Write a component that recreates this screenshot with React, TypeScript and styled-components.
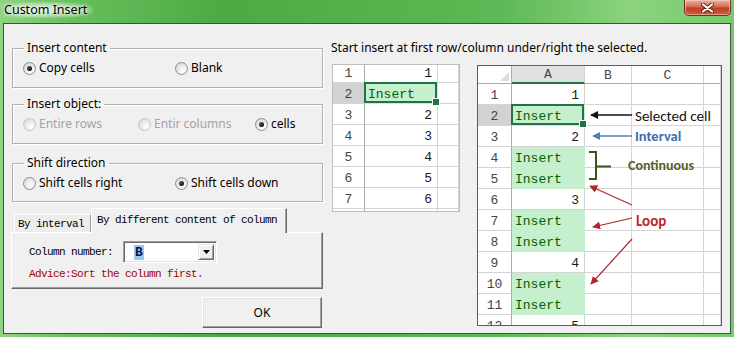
import { Fragment } from "react";
import styled, { createGlobalStyle, css } from "styled-components";

const UI = `"Segoe UI", "Noto Sans", "Liberation Sans", sans-serif`;
const SONG = `SimSun, "Liberation Mono", monospace`;
const CALIBRI = `Calibri, "Liberation Sans", Arial, sans-serif`;

type CellData = { num?: string; insert?: boolean; selected?: boolean; blank?: boolean };

const smallSheet: CellData[] = [
    { num: "1" },
    { insert: true, selected: true },
    { num: "2" },
    { num: "3" },
    { num: "4" },
    { num: "5" },
    { num: "6" },
    { blank: true },
];

const bigSheet: CellData[] = [
    { num: "1" },
    { insert: true, selected: true },
    { num: "2" },
    { insert: true },
    { insert: true },
    { num: "3" },
    { insert: true },
    { insert: true },
    { num: "4" },
    { insert: true },
    { insert: true },
    { num: "5" },
];

function Radio({ label, checked, disabled }: { label: string; checked?: boolean; disabled?: boolean }) {
    return (
        <RadioLabel $disabled={disabled}>
            <RadioDot $checked={checked} $disabled={disabled} />
            {label}
        </RadioLabel>
    );
}

function SheetRows({ rows, extraCols }: { rows: CellData[]; extraCols: number }) {
    return (
        <>
            {rows.map((r, i) => (
                <Fragment key={i}>
                    <RowHead $active={!!r.selected}>{r.blank ? "" : i + 1}</RowHead>
                    <Cell $fill={!!r.insert} $right={!!r.num} $selected={!!r.selected}>
                        {r.blank ? "" : r.num ?? "Insert"}
                    </Cell>
                    {Array.from({ length: extraCols }).map((_, j) => (
                        <Cell key={j} />
                    ))}
                </Fragment>
            ))}
        </>
    );
}

function App() {
    return (
        <>
            <GlobalStyle />
            <Window>
                <TitleBar>
                    <TitleText>Custom Insert</TitleText>
                    <CloseButton>
                        <svg width="13" height="10" viewBox="0 0 13 10">
                            <path d="M2 1.5L11 8.5M11 1.5L2 8.5" stroke="#5a2418" strokeWidth="4" strokeLinecap="round" />
                            <path d="M2 1.5L11 8.5M11 1.5L2 8.5" stroke="#fff" strokeWidth="2.2" strokeLinecap="round" />
                        </svg>
                    </CloseButton>
                </TitleBar>

                <Client>
                    <LeftColumn>
                        <Group $mt={0} $pb={11}>
                            <Legend>Insert content</Legend>
                            <RadioRow $cols="152px 1fr">
                                <Radio label="Copy cells" checked />
                                <Radio label="Blank" />
                            </RadioRow>
                        </Group>
                        <Group $mt={9} $pb={11}>
                            <Legend>Insert object:</Legend>
                            <RadioRow $cols="115px 117px 1fr">
                                <Radio label="Entire rows" disabled />
                                <Radio label="Entir columns" disabled />
                                <Radio label="cells" checked />
                            </RadioRow>
                        </Group>
                        <Group $mt={12} $pb={10}>
                            <Legend>Shift direction</Legend>
                            <RadioRow $cols="152px 1fr">
                                <Radio label="Shift cells right" />
                                <Radio label="Shift cells down" checked />
                            </RadioRow>
                        </Group>

                        <TabStrip>
                            <Tab $w={77}>By interval</Tab>
                            <Tab $w={196} $active>By different content of column</Tab>
                        </TabStrip>
                        <TabPanel>
                            <FieldRow>
                                <MonoText>Column number:</MonoText>
                                <Combo>
                                    <ComboValue>
                                        <Selected>B</Selected>
                                    </ComboValue>
                                    <ComboButton>
                                        <svg width="7" height="4" viewBox="0 0 7 4">
                                            <path d="M0 0H7L3.5 4z" fill="#000" />
                                        </svg>
                                    </ComboButton>
                                </Combo>
                            </FieldRow>
                            <Advice>Advice:Sort the column first.</Advice>
                        </TabPanel>

                        <OkButton>OK</OkButton>
                    </LeftColumn>

                    <RightColumn>
                        <Heading>Start insert at first row/column under/right the selected.</Heading>
                        <Sheets>
                            <Sheet $cols="32px 73px 21px" $rows="18px repeat(7, 21px)" $w={128} $h={148} $frame="#bdbdbd">
                                <SheetRows rows={smallSheet} extraCols={1} />
                            </Sheet>

                            <SheetFrame>
                                <Sheet
                                    $cols="34px 73px 47px 72px 17px"
                                    $rows="18px repeat(12, 21px)"
                                    $w={245}
                                    $h={261}
                                    $frame="#5c5c5c"
                                >
                                    <Corner>
                                        <svg width="9" height="9" viewBox="0 0 9 9">
                                            <path d="M9 0V9H0z" fill="#dcdcdc" />
                                        </svg>
                                    </Corner>
                                    <ColHead $active>A</ColHead>
                                    <ColHead>B</ColHead>
                                    <ColHead>C</ColHead>
                                    <ColHead />
                                    <SheetRows rows={bigSheet} extraCols={3} />
                                </Sheet>

                                <Overlay width="245" height="261" viewBox="0 0 245 261">
                                    <defs>
                                        <marker id="hk" viewBox="0 0 10 10" refX="9" refY="5" markerUnits="userSpaceOnUse" markerWidth="8" markerHeight="8" orient="auto">
                                            <path d="M0 0L10 5L0 10z" fill="#111" />
                                        </marker>
                                        <marker id="hb" viewBox="0 0 10 10" refX="9" refY="5" markerUnits="userSpaceOnUse" markerWidth="8" markerHeight="8" orient="auto">
                                            <path d="M0 0L10 5L0 10z" fill="#4f7fbd" />
                                        </marker>
                                        <marker id="hr" viewBox="0 0 10 10" refX="9" refY="5" markerUnits="userSpaceOnUse" markerWidth="8" markerHeight="8" orient="auto">
                                            <path d="M0 0L10 5L0 10z" fill="#b3262c" />
                                        </marker>
                                    </defs>
                                    <line x1="155" y1="50" x2="114" y2="50" stroke="#111" strokeWidth="1.3" markerEnd="url(#hk)" />
                                    <line x1="155" y1="71" x2="116" y2="71" stroke="#4f7fbd" strokeWidth="1.3" markerEnd="url(#hb)" />
                                    <path d="M112 87H119V114H112M119 101.5H134" fill="none" stroke="#3d5222" strokeWidth="2" />
                                    <line x1="155" y1="140" x2="113" y2="121" stroke="#b3262c" strokeWidth="1.2" markerEnd="url(#hr)" />
                                    <line x1="155" y1="153" x2="116" y2="162" stroke="#b3262c" strokeWidth="1.2" markerEnd="url(#hr)" />
                                    <line x1="155" y1="174" x2="114" y2="219" stroke="#b3262c" strokeWidth="1.2" markerEnd="url(#hr)" />
                                </Overlay>

                                <Note $x={158} $y={43} $size={15} $color="#111">Selected cell</Note>
                                <Note $x={158} $y={63} $size={14.5} $color="#3f6fab" $bold>Interval</Note>
                                <Note $x={151} $y={93} $size={14} $color="#4f6228" $bold>Continuous</Note>
                                <Note $x={159} $y={148} $size={15} $color="#c0272d" $bold>Loop</Note>
                            </SheetFrame>
                        </Sheets>
                    </RightColumn>
                </Client>
            </Window>
        </>
    );
}

const GlobalStyle = createGlobalStyle`
    * { box-sizing: border-box; }
    html, body { margin: 0; padding: 0; }
    body {
        width: 734px;
        height: 337px;
        overflow: hidden;
        font-family: ${UI};
    }
`;

const Window = styled.div`
    width: 734px;
    height: 337px;
    display: flex;
    flex-direction: column;
    padding: 0 3px 3px 3px;
    background: linear-gradient(
        90deg,
        #8fd383 0%,
        #67bf5c 10%,
        #4ea945 30%,
        #55b14b 50%,
        #5db855 68%,
        #8bd37f 86%,
        #78c96d 100%
    );
`;

const TitleBar = styled.div`
    height: 23px;
    display: flex;
    justify-content: space-between;
    align-items: flex-start;
`;

const TitleText = styled.span`
    margin: 2px 0 0 1px;
    padding: 0 6px 0 0;
    font-family: ${UI};
    font-size: 12.5px;
    line-height: 16px;
    color: #000;
    background: radial-gradient(ellipse at 45% 50%, rgba(255, 255, 255, 0.75) 0%, rgba(255, 255, 255, 0.35) 55%, rgba(255, 255, 255, 0) 80%);
    text-shadow: 0 0 6px #fff, 0 0 3px #fff;
`;

const CloseButton = styled.div`
    width: 47px;
    height: 16px;
    display: flex;
    align-items: center;
    justify-content: center;
    border: 1px solid #6e3126;
    border-top: none;
    border-radius: 0 0 5px 5px;
    background: linear-gradient(180deg, #eab0a2 0%, #d9785f 40%, #c23f22 55%, #cf5b3c 100%);
    box-shadow: inset 0 0 0 1px rgba(255, 220, 210, 0.5);
`;

const Client = styled.div`
    flex: 1;
    display: flex;
    gap: 8px;
    padding: 17px 0 0 7px;
    background: #f0f0f0;
    border: 1px solid #39553a;
`;

const LeftColumn = styled.div`
    width: 312px;
    display: flex;
    flex-direction: column;
`;

const Group = styled.fieldset<{ $mt: number; $pb: number }>`
    width: 311px;
    margin: ${(p) => p.$mt}px 0 0 1px;
    padding: 0 0 ${(p) => p.$pb}px 0;
    border: 1px solid #b2b2b2;
    box-shadow: inset 1px 1px 0 #fff, 1px 1px 0 #fff;
    min-inline-size: 0;
`;

const Legend = styled.legend`
    margin-left: 11px;
    padding: 0 3px;
    font-family: ${UI};
    font-size: 12px;
    line-height: 14px;
    color: #000;
`;

const RadioRow = styled.div<{ $cols: string }>`
    display: grid;
    grid-template-columns: ${(p) => p.$cols};
    align-items: center;
    height: 16px;
    margin-top: 5px;
    padding-left: 10px;
`;

const RadioLabel = styled.label<{ $disabled?: boolean }>`
    display: flex;
    align-items: center;
    gap: 3px;
    font-family: ${UI};
    font-size: 12px;
    line-height: 16px;
    white-space: nowrap;
    color: ${(p) => (p.$disabled ? "#a3a3a3" : "#000")};
`;

const RadioDot = styled.span<{ $checked?: boolean; $disabled?: boolean }>`
    flex: none;
    width: 13px;
    height: 13px;
    border-radius: 50%;
    border: 1px solid ${(p) => (p.$disabled ? "#c4c4c4" : "#8c8c8c")};
    background: radial-gradient(circle at 65% 70%, #ffffff 0%, #ececec 45%, #cfcfcf 100%);
    display: flex;
    align-items: center;
    justify-content: center;

    &::after {
        content: "";
        display: ${(p) => (p.$checked ? "block" : "none")};
        width: 5px;
        height: 5px;
        border-radius: 50%;
        background: radial-gradient(circle at 35% 35%, #5a5a5a 0%, #111 70%);
    }
`;

const TabStrip = styled.div`
    height: 24px;
    margin-top: 6px;
    padding-left: 3px;
    display: flex;
    align-items: flex-end;
    position: relative;
    z-index: 1;
`;

const Tab = styled.div<{ $w: number; $active?: boolean }>`
    width: ${(p) => p.$w}px;
    height: ${(p) => (p.$active ? 25 : 18)}px;
    margin-bottom: ${(p) => (p.$active ? -1 : 0)}px;
    padding: ${(p) => (p.$active ? "0 0 3px 5px" : "1px 0 0 3px")};
    display: flex;
    align-items: center;
    font-family: ${SONG};
    font-size: 11px;
    letter-spacing: -0.6px;
    color: #000;
    white-space: nowrap;
    background: ${(p) => (p.$active ? "#f0f0f0" : "#ececec")};
    border-top: 1px solid #fff;
    border-left: 1px solid #fff;
    border-right: 1px solid ${(p) => (p.$active ? "#696969" : "#a0a0a0")};
    box-shadow: ${(p) => (p.$active ? "inset -1px 0 0 #a0a0a0" : "none")};
`;

const TabPanel = styled.div`
    height: 57px;
    padding: 8px 0 0 17px;
    border-top: 1px solid #fff;
    border-left: 1px solid #fff;
    border-right: 1px solid #696969;
    border-bottom: 1px solid #696969;
    box-shadow: inset -1px -1px 0 #a0a0a0;
`;

const FieldRow = styled.div`
    display: flex;
    align-items: center;
    gap: 10px;
`;

const MonoText = styled.span`
    font-family: ${SONG};
    font-size: 11px;
    letter-spacing: -0.6px;
    color: #000;
    white-space: nowrap;
`;

const Advice = styled(MonoText)`
    display: block;
    margin-top: 5px;
    line-height: 12px;
    color: #a00000;
`;

const Combo = styled.div`
    width: 94px;
    height: 22px;
    display: flex;
    background: #fff;
    border-top: 1px solid #a0a0a0;
    border-left: 1px solid #a0a0a0;
    border-right: 1px solid #fff;
    border-bottom: 1px solid #fff;
    box-shadow: inset 1px 1px 0 #696969, inset -1px -1px 0 #e3e3e3;
    padding: 2px;
`;

const ComboValue = styled.div`
    flex: 1;
    display: flex;
    align-items: center;
    padding-left: 8px;
    font-family: ${SONG};
    font-size: 13px;
    font-weight: bold;
`;

const Selected = styled.span`
    background: #99c9ef;
    color: #10104a;
    padding: 0 1px;
    line-height: 15px;
`;

const ComboButton = styled.div`
    width: 16px;
    display: flex;
    align-items: center;
    justify-content: center;
    background: #f0f0f0;
    border-top: 1px solid #e3e3e3;
    border-left: 1px solid #e3e3e3;
    border-right: 1px solid #696969;
    border-bottom: 1px solid #696969;
    box-shadow: inset 1px 1px 0 #fff, inset -1px -1px 0 #a0a0a0;
`;

const OkButton = styled.div`
    width: 120px;
    height: 31px;
    margin: 8px 1px 0 auto;
    display: flex;
    align-items: center;
    justify-content: center;
    font-family: ${UI};
    font-size: 12px;
    color: #000;
    background: #f0f0f0;
    border-top: 1px solid #fff;
    border-left: 1px solid #fff;
    border-right: 1px solid #696969;
    border-bottom: 1px solid #696969;
    box-shadow: inset -1px -1px 0 #a0a0a0, inset 1px 1px 0 #e3e3e3;
`;

const RightColumn = styled.div`
    display: flex;
    flex-direction: column;
`;

const Heading = styled.div`
    font-family: ${UI};
    font-size: 12px;
    line-height: 14px;
    color: #000;
    white-space: nowrap;
`;

const Sheets = styled.div`
    display: flex;
    align-items: flex-start;
    margin-top: 9px;
    padding-left: 1px;
`;

const Sheet = styled.div<{ $cols: string; $rows: string; $w: number; $h: number; $frame: string }>`
    width: ${(p) => p.$w}px;
    height: ${(p) => p.$h}px;
    display: grid;
    grid-template-columns: ${(p) => p.$cols};
    grid-template-rows: ${(p) => p.$rows};
    overflow: hidden;
    background: #fff;
    border: 1px solid ${(p) => p.$frame};
`;

const SheetFrame = styled.div`
    position: relative;
    margin: 1px 0 0 17px;
`;

const Cell = styled.div<{ $fill?: boolean; $right?: boolean; $selected?: boolean }>`
    display: flex;
    align-items: flex-end;
    justify-content: ${(p) => (p.$right ? "flex-end" : "flex-start")};
    padding: 0 5px 1px 3px;
    font-family: ${SONG};
    font-size: 13px;
    line-height: 15px;
    white-space: nowrap;
    color: ${(p) => (p.$fill ? "#006100" : "#1a1a1a")};
    background: ${(p) => (p.$fill ? "#c6efce" : "#fff")};
    border-right: 1px solid ${(p) => (p.$fill ? "#c6efce" : "#d4d4d4")};
    border-bottom: 1px solid ${(p) => (p.$fill ? "#c6efce" : "#d4d4d4")};

    ${(p) =>
        p.$selected &&
        css`
            position: relative;

            &::before {
                content: "";
                position: absolute;
                inset: -1px 0 0 -1px;
                border: 2px solid #217346;
                z-index: 2;
            }

            &::after {
                content: "";
                position: absolute;
                right: -3px;
                bottom: -3px;
                width: 6px;
                height: 6px;
                background: #217346;
                border: 1px solid #fff;
                z-index: 3;
            }
        `}
`;

const RowHead = styled.div<{ $active?: boolean }>`
    display: flex;
    align-items: flex-end;
    justify-content: center;
    padding-bottom: 1px;
    font-family: ${SONG};
    font-size: 13px;
    line-height: 15px;
    color: #444;
    background: ${(p) => (p.$active ? "#d2d2d2" : "#fff")};
    border-right: 1px solid #ababab;
    border-bottom: 1px solid #d4d4d4;
`;

const ColHead = styled.div<{ $active?: boolean }>`
    display: flex;
    align-items: center;
    justify-content: center;
    padding-top: 1px;
    font-family: ${SONG};
    font-size: 13px;
    color: #444;
    background: ${(p) => (p.$active ? "#e1e1e1" : "#fff")};
    border-right: 1px solid #d4d4d4;
    border-bottom: ${(p) => (p.$active ? "2px solid #217346" : "1px solid #ababab")};
`;

const Corner = styled.div`
    display: flex;
    align-items: flex-end;
    justify-content: flex-end;
    padding: 0 2px 2px 0;
    background: #fff;
    border-right: 1px solid #ababab;
    border-bottom: 1px solid #ababab;
`;

const Overlay = styled.svg`
    position: absolute;
    left: 0;
    top: 0;
    pointer-events: none;
`;

const Note = styled.span<{ $x: number; $y: number; $size: number; $color: string; $bold?: boolean }>`
    position: absolute;
    left: ${(p) => p.$x}px;
    top: ${(p) => p.$y}px;
    font-family: ${CALIBRI};
    font-size: ${(p) => p.$size}px;
    font-weight: ${(p) => (p.$bold ? 700 : 400)};
    line-height: 16px;
    color: ${(p) => p.$color};
    white-space: nowrap;
`;

export default App;
